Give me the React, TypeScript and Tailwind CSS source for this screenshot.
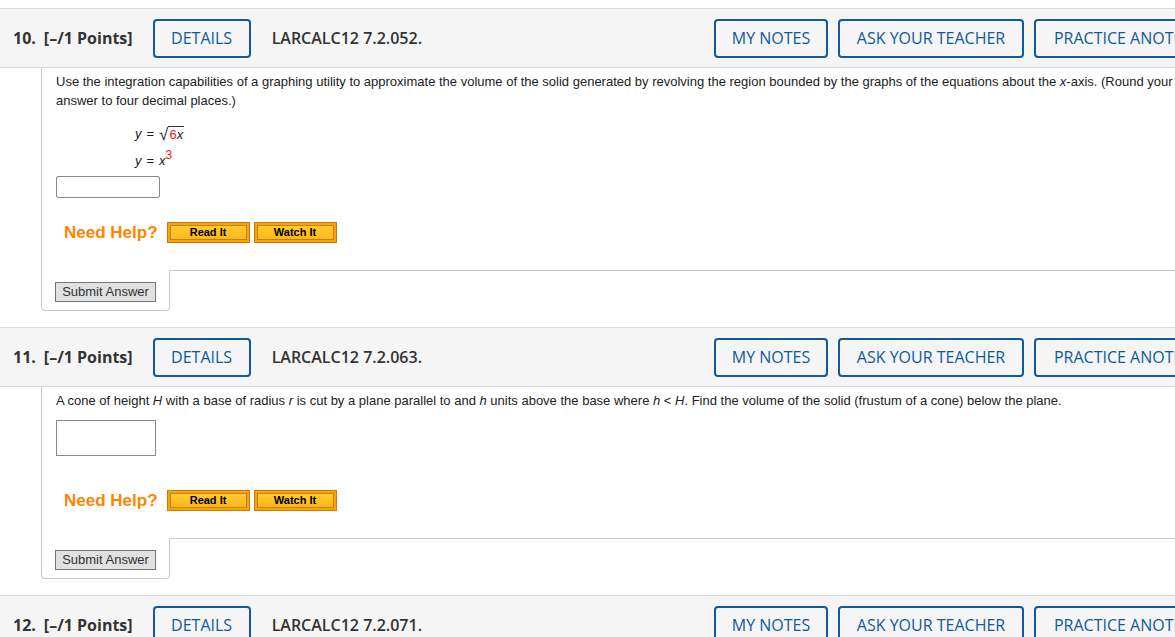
import React from 'react';

const HeaderButton: React.FC<{ label: string; w: string }> = ({ label, w }) => (
  <div
    className={`${w} h-[39px] shrink-0 flex items-center justify-center rounded-[4px] border-2 border-[#0e5a9c] text-[#0e5a9c] text-[16px] font-medium whitespace-nowrap overflow-hidden`}
  >
    {label}
  </div>
);

const QuestionHeader: React.FC<{ num: string; code: string; top: string }> = ({ num, code, top }) => (
  <div
    className={`${top} w-[1234px] h-[60px] flex items-center border-y border-[#dcdcdc] bg-[#f5f5f5] pl-[13px] pr-[10px] text-[#333]`}
    style={{ fontFamily: '"Open Sans", sans-serif' }}
  >
    <span className="font-bold text-[16px] mr-[8px]">{num}</span>
    <span className="font-bold text-[16px]">[–/1 Points]</span>
    <div className="ml-[20px]">
      <HeaderButton label="DETAILS" w="w-[98px]" />
    </div>
    <span className="ml-[21px] font-semibold text-[16px]">{code}</span>
    <div className="ml-auto flex gap-[10px]">
      <HeaderButton label="MY NOTES" w="w-[114px]" />
      <HeaderButton label="ASK YOUR TEACHER" w="w-[186px]" />
      <HeaderButton label="PRACTICE ANOTHER" w="w-[190px]" />
    </div>
  </div>
);

const HelpButton: React.FC<{ label: string }> = ({ label }) => (
  <div className="w-[83px] h-[21px] border border-[#c77a10] bg-[#ffa200] p-[2px]">
    <div className="h-full border border-[#b8822a] bg-gradient-to-b from-[#ffcc33] to-[#ffb612] flex items-center justify-center text-[11px] font-bold text-black leading-none">
      {label}
    </div>
  </div>
);

const NeedHelp: React.FC<{ mt: string }> = ({ mt }) => (
  <div className={`${mt} flex items-center pl-[8px] h-[21px]`}>
    <span className="text-[17px] font-bold text-[#ff8400] mr-[9px]">Need Help?</span>
    <div className="flex gap-[4px]">
      <HelpButton label="Read It" />
      <HelpButton label="Watch It" />
    </div>
  </div>
);

const SubmitRow: React.FC = () => (
  <div className="flex">
    <div className="w-[129px] h-[41px] shrink-0 border-x border-b border-[#cccccc] rounded-b-[4px] pl-[13px] pt-[12px]">
      <div className="w-[101px] h-[20px] border border-[#777] bg-[#e1e1e1] flex items-center justify-center text-[13px] text-[#333]">
        Submit Answer
      </div>
    </div>
    <div className="flex-1 border-t border-[#cccccc]" />
  </div>
);

const App: React.FC = () => {
  return (
    <div
      className="w-[1175px] h-[637px] overflow-hidden bg-white"
      style={{ fontFamily: '"Liberation Sans", Arial, sans-serif' }}
    >
      <div className="w-[1234px]">
        {/* Question 10 */}
        <QuestionHeader num="10." code="LARCALC12 7.2.052." top="mt-[8px]" />
        <div className="ml-[41px]">
          <div className="border-l border-[#cccccc] pl-[14px] pt-[4px] pb-[27px] text-[13px] text-[#222]">
            <p className="leading-[19px] w-[1120px]">
              Use the integration capabilities of a graphing utility to approximate the volume of the solid generated by
              revolving the region bounded by the graphs of the equations about the <i>x</i>-axis. (Round your answer to
              four decimal places.)
            </p>
            <div className="mt-[10px] pl-[79px]">
              <div className="h-[27px] flex items-center">
                <i>y</i>
                <span className="mx-[5px]">=</span>
                <span className="text-[17px] leading-none relative top-[1px]">√</span>
                <span className="border-t border-[#333] leading-[15px] pl-[1px] pr-[1px]">
                  <span className="text-[#ee1c1c]">6</span>
                  <i>x</i>
                </span>
              </div>
              <div className="h-[27px] flex items-center">
                <i>y</i>
                <span className="mx-[5px]">=</span>
                <i>x</i>
                <span className="text-[#ee1c1c] text-[12px] relative -top-[6px]">3</span>
              </div>
            </div>
            <div className="mt-[2px] w-[104px] h-[22px] border border-[#8a8a8a] rounded-[2px]" />
            <NeedHelp mt="mt-[24px]" />
          </div>
          <SubmitRow />
        </div>

        {/* Question 11 */}
        <QuestionHeader num="11." code="LARCALC12 7.2.063." top="mt-[16px]" />
        <div className="ml-[41px]">
          <div className="border-l border-[#cccccc] pl-[14px] pt-[4px] pb-[27px] text-[13px] text-[#222]">
            <p className="leading-[19px]">
              A cone of height <i>H</i> with a base of radius <i>r</i> is cut by a plane parallel to and <i>h</i> units
              above the base where <i>h</i> &lt; <i>H</i>. Find the volume of the solid (frustum of a cone) below the
              plane.
            </p>
            <div className="mt-[10px] w-[100px] h-[36px] border border-[#8a8a8a]" />
            <NeedHelp mt="mt-[34px]" />
          </div>
          <SubmitRow />
        </div>

        {/* Question 12 */}
        <QuestionHeader num="12." code="LARCALC12 7.2.071." top="mt-[16px]" />
      </div>
    </div>
  );
};

export default App;
